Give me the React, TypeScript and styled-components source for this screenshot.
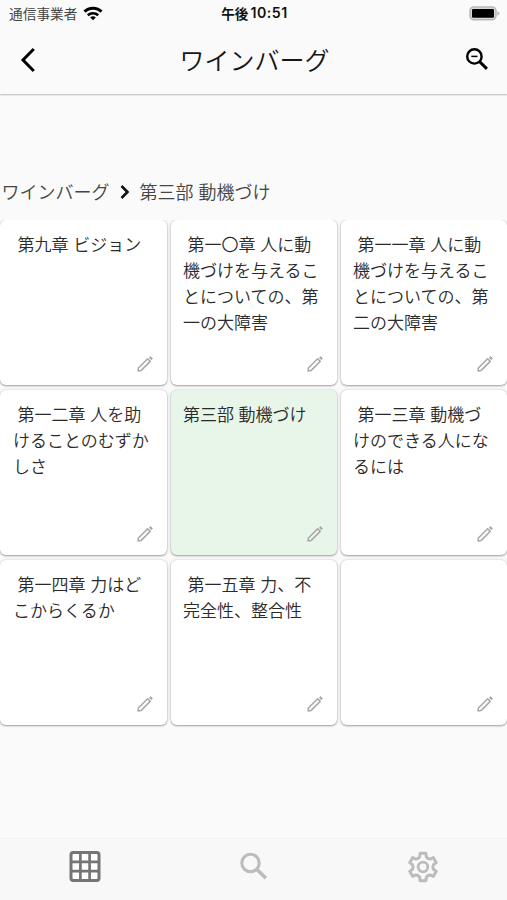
import React from 'react';
import styled, { createGlobalStyle } from 'styled-components';

const GlobalStyle = createGlobalStyle`
  * { box-sizing: border-box; }
  body {
    margin: 0;
    background: #fafafa;
    font-family: "Noto Sans CJK JP", sans-serif;
    overflow: hidden;
  }
  svg { display: block; }
`;

const Screen = styled.div`
  width: 507px;
  height: 900px;
  display: flex;
  flex-direction: column;
  background: #fafafa;
  overflow: hidden;
`;

const StatusBar = styled.div`
  height: 27px;
  display: grid;
  grid-template-columns: 1fr auto 1fr;
  align-items: center;
  padding: 0 7px 1px 9px;
`;

const Carrier = styled.div`
  display: flex;
  align-items: center;
  gap: 6px;
  font-size: 13.7px;
  line-height: 20px;
  color: #444;
`;

const Clock = styled.div`
  display: flex;
  align-items: center;
  gap: 2px;
  font-size: 13.6px;
  font-weight: 700;
  line-height: 20px;
  color: #111;
`;

const Digits = styled.span`
  font-family: Inter, sans-serif;
  font-weight: 600;
  font-size: 14.2px;
  letter-spacing: 0.5px;
`;

const BatterySlot = styled.div`
  justify-self: end;
`;

const AppBar = styled.header`
  height: 67px;
  flex: none;
  display: grid;
  grid-template-columns: 56px 1fr 56px;
  align-items: center;
  justify-items: center;
  color: #151515;
  padding-bottom: 2px;
  box-shadow: 0 1px 1.5px rgba(0, 0, 0, 0.26);
`;

const Title = styled.h1`
  margin: -2px 0 0 2px;
  font-size: 25px;
  font-weight: 350;
  line-height: 36px;
`;

const BackButton = styled.button`
  border: 0;
  padding: 0;
  background: none;
  color: #000;
`;

const ZoomButton = styled(BackButton)`
  padding: 0 4px 2px 0;
`;

const Main = styled.main`
  flex: 1;
  padding-top: 84px;
`;

const Breadcrumb = styled.nav`
  height: 42px;
  padding: 0 0 15px 1.5px;
  display: flex;
  align-items: center;
  gap: 10px;
  font-size: 18px;
  font-weight: 350;
  line-height: 27px;
  white-space: pre;
  word-spacing: 1px;
  color: #454545;
`;

const Chevron = styled.svg`
  flex: none;
`;

const Grid = styled.div`
  width: 510px;
  display: grid;
  grid-template-columns: 167px 166px 166px;
  grid-auto-rows: 165px;
  column-gap: 4px;
  row-gap: 5px;
  clip-path: inset(0 0 -6px 0);
`;

const Card = styled.article<{ $selected?: boolean }>`
  display: flex;
  flex-direction: column;
  justify-content: space-between;
  border-radius: 6px;
  padding: 11px 14px 13px 12px;
  background: ${(p) => (p.$selected ? '#e8f5e9' : '#fff')};
  box-shadow: 0 1px 2px rgba(0, 0, 0, 0.32), 0 0 3px rgba(0, 0, 0, 0.16);

  &:nth-child(3n + 1) {
    padding-left: 13px;
  }
`;

const CardText = styled.p`
  margin: 0;
  white-space: pre;
  font-size: 17px;
  font-weight: 350;
  line-height: 25.9px;
  word-spacing: 0.8px;
  color: #2a2a2a;
`;

const EditButton = styled.button`
  align-self: flex-end;
  border: 0;
  padding: 0;
  background: none;
  color: #a8a8a8;
`;

const TabBar = styled.footer`
  height: 62px;
  flex: none;
  display: grid;
  grid-template-columns: repeat(3, 1fr);
  justify-items: center;
  padding-top: 9px;
  border-top: 1px solid #f0f0f0;
  background: #f8f8f8;
`;

const Tab = styled.div<{ $active?: boolean }>`
  color: ${(p) => (p.$active ? '#757575' : '#bcbcbc')};
`;

const cards: { text: string; selected?: boolean }[] = [
  { text: ' 第九章 ビジョン' },
  { text: ' 第一〇章 人に動\n機づけを与えるこ\nとについての、第\n一の大障害' },
  { text: ' 第一一章 人に動\n機づけを与えるこ\nとについての、第\n二の大障害' },
  { text: ' 第一二章 人を助\nけることのむずか\nしさ' },
  { text: '第三部 動機づけ', selected: true },
  { text: ' 第一三章 動機づ\nけのできる人にな\nるには' },
  { text: ' 第一四章 力はど\nこからくるか' },
  { text: ' 第一五章 力、不\n完全性、整合性' },
  { text: '' },
];

const Wifi = () => (
  <svg width="20" height="15" viewBox="0 0 20 15" fill="none" stroke="#000" strokeWidth="3">
    <path d="M1.500 5.600C6 1 14 1 18.500 5.600" />
    <path d="M4.800 9.300c3-2.800 7.400-2.800 10.400 0" strokeWidth="2.600" />
    <path d="M7.200 11.400c1.600-1.500 4-1.500 5.600 0L10 14.200z" fill="#000" stroke="none" />
  </svg>
);

const Battery = () => (
  <svg width="31" height="15" viewBox="0 0 31 15">
    <rect x="1" y="1" width="26" height="12.800" rx="4" fill="#d8d8d8" stroke="#b8b8b8" strokeWidth="1.600" />
    <rect x="3" y="3" width="22" height="8.800" rx="1.200" fill="#000" />
    <path d="M28.300 5l2.500 2.400-2.500 2.400z" fill="#b5b5b5" />
  </svg>
);

const ZoomOut = () => (
  <svg width="22" height="22" viewBox="0 0 22 22" fill="none" stroke="currentColor">
    <circle cx="8.400" cy="8.400" r="7.200" strokeWidth="2.400" />
    <path d="M5.300 8.400h6.200" strokeWidth="1.500" />
    <path d="M13.600 13.600l7.300 7.300" strokeWidth="2.900" />
  </svg>
);

const Pencil = () => (
  <svg width="16" height="16" viewBox="0 0 16 16" fill="none" stroke="currentColor" strokeWidth="1.500">
    <path d="M1.100 14.900l.3-2.900L10.600 2.800l2.600 2.600L4 14.600z" strokeLinejoin="round" />
    <path d="M12.400 1.700l1.200-1.100 1.900 1.900-1.200 1.200z" fill="currentColor" strokeWidth=".8" strokeLinejoin="round" />
  </svg>
);

const GridIcon = () => (
  <svg width="38" height="38" viewBox="0 0 38 38" fill="#fff" stroke="currentColor" strokeWidth="3">
    <rect x="5" y="4.500" width="28" height="28" rx="2.200" />
    <path d="M14.400 4.500v28M23.600 4.500v28M5 13.900h28M5 23.100h28" strokeWidth="2.700" />
  </svg>
);

const Search = () => (
  <svg width="38" height="38" viewBox="0 0 38 38" fill="none" stroke="currentColor">
    <circle cx="15.500" cy="15" r="8.700" strokeWidth="3.100" />
    <path d="M21.700 21.300l9.200 9" strokeWidth="3.700" />
  </svg>
);

/* Six teeth, each with two outer corners; the roots are drawn as shallow inward curves. */
const gearPoint = (radius: number, degrees: number) => {
  const a = ((degrees - 90) * Math.PI) / 180;
  return `${(19 + radius * Math.cos(a)).toFixed(2)} ${(19 + radius * Math.sin(a)).toFixed(2)}`;
};

const gearPath =
  [0, 60, 120, 180, 240, 300]
    .map(
      (t, i) =>
        `${i ? 'L' : 'M'}${gearPoint(14, t - 12)}L${gearPoint(14, t + 12)}` +
        `L${gearPoint(10.7, t + 18)}Q${gearPoint(9.2, t + 30)} ${gearPoint(10.7, t + 42)}`,
    )
    .join('') + 'Z';

const Gear = () => (
  <svg width="38" height="38" viewBox="0 0 38 38" fill="none" stroke="currentColor" strokeLinejoin="round">
    <path d={gearPath} strokeWidth="3" />
    <circle cx="19" cy="19" r="4.800" strokeWidth="2.800" />
  </svg>
);

export default function App() {
  return (
    <Screen>
      <GlobalStyle />
      <StatusBar>
        <Carrier>
          通信事業者
          <Wifi />
        </Carrier>
        <Clock>
          午後<Digits>10:51</Digits>
        </Clock>
        <BatterySlot>
          <Battery />
        </BatterySlot>
      </StatusBar>
      <AppBar>
        <BackButton aria-label="戻る">
          <svg width="16" height="26" viewBox="0 0 16 26" fill="none" stroke="currentColor" strokeWidth="3">
            <path d="M13.800 2L3 13l10.800 11" />
          </svg>
        </BackButton>
        <Title>ワインバーグ</Title>
        <ZoomButton aria-label="縮小">
          <ZoomOut />
        </ZoomButton>
      </AppBar>
      <Main>
        <Breadcrumb>
          <span>ワインバーグ</span>
          <Chevron width="10" height="16" viewBox="0 0 10 16" fill="none" stroke="#111" strokeWidth="2.600">
            <path d="M1.500 2l6 6-6 6" />
          </Chevron>
          <span>第三部 動機づけ</span>
        </Breadcrumb>
        <Grid>
          {cards.map((card, i) => (
            <Card key={i} $selected={card.selected}>
              <CardText>{card.text}</CardText>
              <EditButton aria-label="編集">
                <Pencil />
              </EditButton>
            </Card>
          ))}
        </Grid>
      </Main>
      <TabBar>
        <Tab $active>
          <GridIcon />
        </Tab>
        <Tab>
          <Search />
        </Tab>
        <Tab>
          <Gear />
        </Tab>
      </TabBar>
    </Screen>
  );
}
